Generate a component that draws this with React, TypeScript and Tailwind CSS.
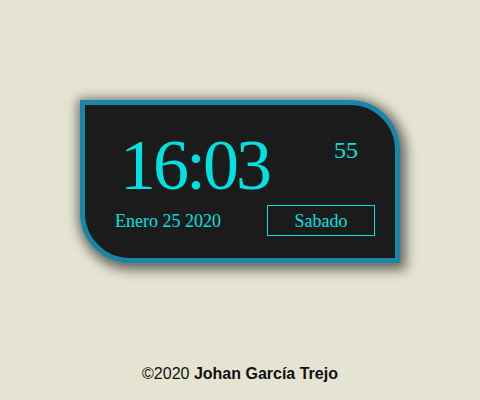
import React from 'react';

const App: React.FC = () => {
  return (
    <div className="min-h-screen bg-[#e5e4d3] pt-[100px] flex flex-col items-center">
      {/* Clock card */}
      <div className="w-[320px] h-[163px] bg-[#1b1b1b] border-[5px] border-[#1786a8] rounded-tr-[50px] rounded-bl-[50px] shadow-[2px_3px_12px_4px_rgba(0,0,0,0.55)] pt-[24px] pl-[30px] pr-[20px] font-['Liberation_Serif',serif] text-[#00e1e1]">
        <div className="flex justify-between items-start">
          <span className="text-[72px] leading-none tracking-[-3px] ml-[5px]">16:03</span>
          <span className="text-[24px] leading-none mt-[9px] mr-[17px]">55</span>
        </div>
        <div className="flex justify-between items-center mt-[4px]">
          <span className="text-[18px] leading-none">Enero 25 2020</span>
          <div className="w-[108px] h-[31px] border border-[#00e1e1] flex items-center justify-center text-[18px] leading-none">
            Sabado
          </div>
        </div>
      </div>

      {/* Footer */}
      <p className="mt-[103px] text-[16px] leading-none text-[#111] font-['Liberation_Sans',sans-serif]">
        ©2020 <span className="font-bold">Johan García Trejo</span>
      </p>
    </div>
  );
};

export default App;
